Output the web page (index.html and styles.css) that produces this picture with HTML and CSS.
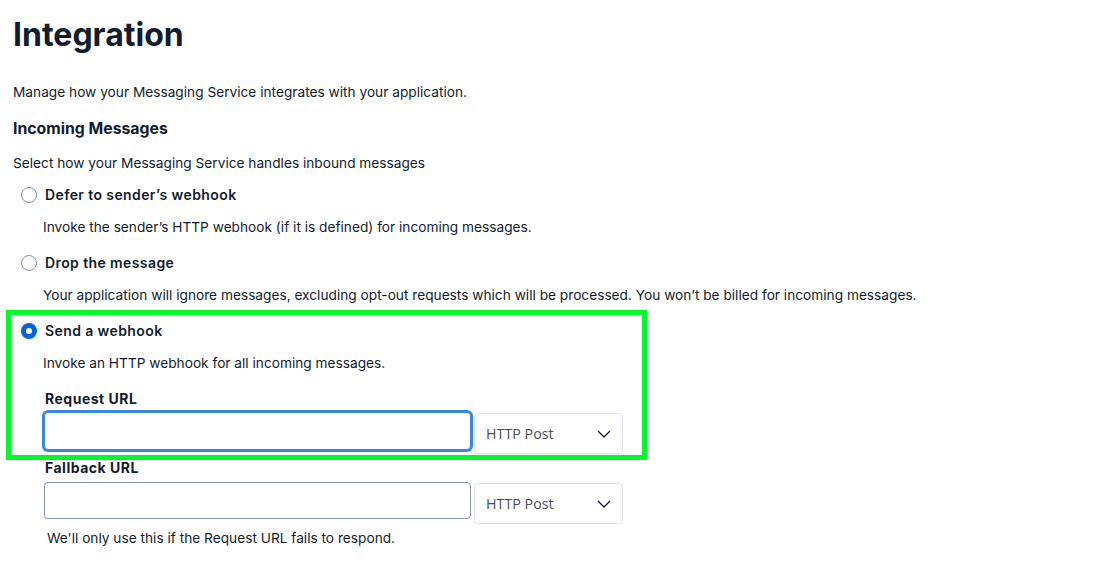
FILE: index.html
```html
<!DOCTYPE html>
<html lang="en">
<head>
<meta charset="utf-8">
<title>Integration</title>
<link rel="stylesheet" href="styles.css">
</head>
<body>
<main class="page">
  <h1 class="title">Integration</h1>
  <p class="lead">Manage how your Messaging Service integrates with your application.</p>
  <h2 class="section-title">Incoming Messages</h2>
  <p class="section-desc">Select how your Messaging Service handles inbound messages</p>

  <div class="options">
    <div class="option">
      <label class="option-label"><span class="radio"></span>Defer to sender’s webhook</label>
      <p class="option-help">Invoke the sender’s HTTP webhook (if it is defined) for incoming messages.</p>
    </div>

    <div class="option">
      <label class="option-label"><span class="radio"></span>Drop the message</label>
      <p class="option-help">Your application will ignore messages, excluding opt-out requests which will be processed. You won’t be billed for incoming messages.</p>
    </div>

    <div class="option option--highlight">
      <label class="option-label"><span class="radio radio--checked"></span>Send a webhook</label>
      <p class="option-help">Invoke an HTTP webhook for all incoming messages.</p>
      <div class="field">
        <div class="field-label">Request URL</div>
        <div class="field-row">
          <div class="input input--focus"></div>
          <div class="select"><span>HTTP Post</span><svg class="chevron" width="14" height="8" viewBox="0 0 14 8"><path d="M1 1l6 6 6-6" fill="none" stroke="#121c2d" stroke-width="1.3"/></svg></div>
        </div>
      </div>
    </div>

    <div class="field field--fallback">
      <div class="field-label">Fallback URL</div>
      <div class="field-row">
        <div class="input input--fallback"></div>
        <div class="select"><span>HTTP Post</span><svg class="chevron" width="14" height="8" viewBox="0 0 14 8"><path d="M1 1l6 6 6-6" fill="none" stroke="#121c2d" stroke-width="1.3"/></svg></div>
      </div>
      <p class="field-help">We'll only use this if the Request URL fails to respond.</p>
    </div>
  </div>
</main>
</body>
</html>
```

FILE: styles.css
```css
*, *::before, *::after { box-sizing: border-box; }

body {
  margin: 0;
  background: #ffffff;
  color: #121c2d;
  font-family: Inter, "Noto Sans", sans-serif;
  font-size: 13.7px;
  line-height: 20px;
}

.page {
  padding: 0 13px;
}

.title {
  margin: 15px 0 0;
  font-size: 32px;
  line-height: 40px;
  font-weight: 700;
  color: #121c2d;
}

.lead {
  margin: 27px 0 0;
}

.section-title {
  margin: 15px 0 0;
  font-size: 15.8px;
  line-height: 24px;
  font-weight: 700;
}

.section-desc {
  margin: 12px 0 0;
}

.options {
  display: flex;
  flex-direction: column;
}

.option {
  margin-top: 16px;
}

.option:first-child {
  margin-top: 12px;
}

.option-label {
  display: flex;
  align-items: center;
  gap: 8px;
  padding-left: 8px;
  font-size: 14px;
  font-weight: 600;
  letter-spacing: 0.4px;
}

.radio {
  width: 16px;
  height: 16px;
  border-radius: 50%;
  border: 1px solid #8891aa;
  background: #fff;
  flex: none;
}

.radio--checked {
  border: 5px solid #0263e0;
  background: #fff;
}

.option-help {
  margin: 12px 0 0;
  padding-left: 30px;
}

.option--highlight {
  position: relative;
}

.option--highlight::after {
  content: "";
  position: absolute;
  top: -11px;
  left: -7px;
  width: 641px;
  height: 150px;
  border: 5px solid #00f92b;
  pointer-events: none;
}

.field {
  padding-left: 31px;
  margin-top: 16px;
}

.field--fallback {
  margin-top: 4px;
}

.field-label {
  padding-left: 1px;
  font-size: 14px;
  font-weight: 700;
  letter-spacing: 0.5px;
}

.field-row {
  display: flex;
  align-items: flex-start;
  gap: 3px;
  margin-top: 3px;
}

.field--fallback .field-row {
  margin-top: 4px;
}

.input {
  width: 427px;
  height: 38px;
  border: 1px solid #8891aa;
  border-radius: 4px;
  background: #fff;
}

.input--focus {
  border-color: #3a86e3;
  box-shadow: 0 0 0 2px #3a86e3;
}

.input--fallback {
  height: 37px;
}

.select {
  width: 149px;
  height: 41px;
  margin-top: 1px;
  border: 1px solid #e1e3ea;
  border-radius: 4px;
  display: flex;
  align-items: center;
  justify-content: space-between;
  padding: 0 11px 0 11px;
  font-family: "Open Sans", "Noto Sans", sans-serif;
  font-size: 14.3px;
  color: #4a4f58;
}

.chevron {
  display: block;
}

.field-help {
  margin: 4px 0 0;
  padding-left: 3px;
}
```
